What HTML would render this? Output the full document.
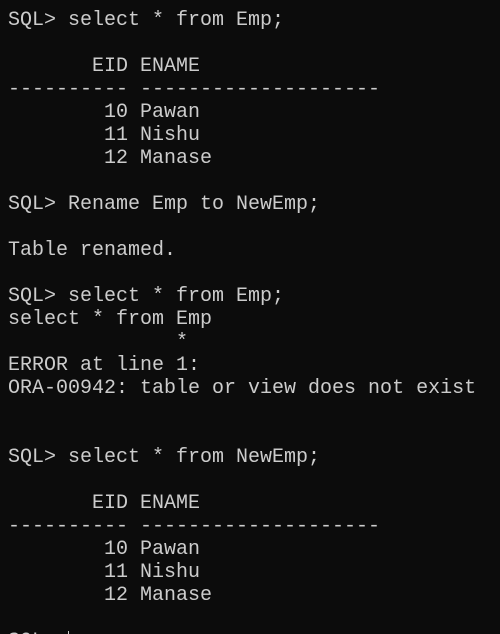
<!DOCTYPE html>
<html><head><meta charset="utf-8"><style>
html,body{margin:0;padding:0;background:#0c0c0c;width:500px;height:634px;overflow:hidden}
pre{margin:0;padding:9px 0 0 8px;font-family:"Liberation Mono",monospace;font-size:20px;line-height:23px;color:#cccccc;white-space:pre}
.c{display:inline-block;width:1px;height:18px;background:#ccc;vertical-align:-3px}
</style></head><body><pre>SQL&gt; select * from Emp;

       EID ENAME
---------- --------------------
        10 Pawan
        11 Nishu
        12 Manase

SQL&gt; Rename Emp to NewEmp;

Table renamed.

SQL&gt; select * from Emp;
select * from Emp
              *
ERROR at line 1:
ORA-00942: table or view does not exist


SQL&gt; select * from NewEmp;

       EID ENAME
---------- --------------------
        10 Pawan
        11 Nishu
        12 Manase

SQL&gt; <span class="c"></span></pre></body></html>
